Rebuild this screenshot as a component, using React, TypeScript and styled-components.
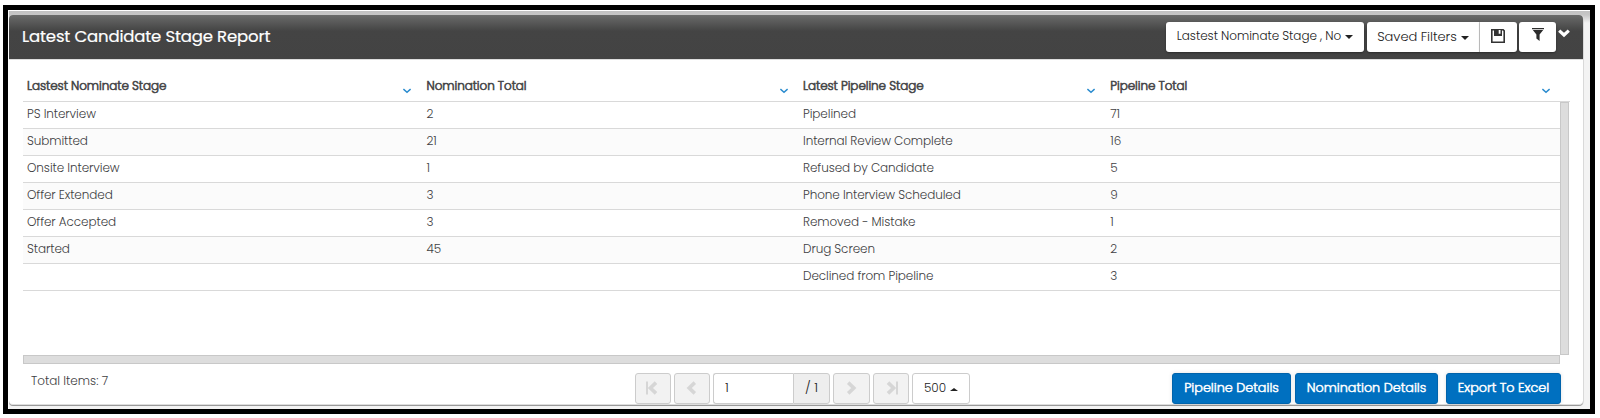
import React from 'react';
import styled, { createGlobalStyle } from 'styled-components';

const GlobalStyle = createGlobalStyle`
  *, *::before, *::after { box-sizing: border-box; }
  body {
    margin: 0;
    background: #fff;
    font-family: Poppins, Inter, "Open Sans", sans-serif;
    font-size: 12px;
    font-weight: 300;
    color: #404042;
  }
  button, input { font: inherit; color: inherit; }
`;

const Frame = styled.main`
  width: 1592px;
  height: 409px;
  margin: 5px 0 0 3px;
  border: 5px solid #000;
  padding: 1px 0 0 1px;
  background: #fff;
`;

const Backdrop = styled.div`
  height: 398px;
  padding: 4px 7px 0 0;
  background: linear-gradient(#c2c2c2 0, #c6c6c6 4px, #f3f3f3 12px);
`;

const Panel = styled.section`
  height: 390px;
  background: #fff;
  border-radius: 4px;
  box-shadow: 0 1px 0 #999, 1px 0 0 #d9d9d9;
  border-bottom: 1px solid #ddd;
`;

const PanelHeader = styled.header`
  display: flex;
  align-items: flex-start;
  height: 45px;
  padding: 7px 13px 0 13px;
  border-radius: 4px 4px 0 0;
  border-bottom: 1px solid #ddd;
  background: linear-gradient(#6a6b6a 0, #444 16px, #434343 100%);
`;

const Title = styled.h1`
  flex: 1;
  margin: 0;
  color: #fff;
  font-size: 16.5px;
  font-weight: 400;
  line-height: 29px;
  letter-spacing: -0.16px;
  -webkit-text-stroke: 0.2px currentColor;
  white-space: nowrap;
`;

const HeaderButton = styled.button<{ $width: number; $gap?: number; $join?: 'left' | 'right'; $size?: number }>`
  display: flex;
  align-items: center;
  justify-content: center;
  width: ${p => p.$width}px;
  height: 30px;
  margin: 0 0 0 ${p => p.$gap ?? 0}px;
  padding: ${p => (p.$join === 'left' ? '0' : '0 0 2px')};
  border: 0;
  border-right: ${p => (p.$join === 'left' ? '1px solid #ccc' : '0')};
  border-radius: ${p => (p.$join === 'left' ? '3px 0 0 3px' : p.$join === 'right' ? '0 3px 3px 0' : '3px')};
  background: #fff;
  box-shadow: 0 1px 2px rgba(0, 0, 0, 0.35);
  color: #222;
  font-size: ${p => p.$size ?? 12}px;
  letter-spacing: -0.05px;
  white-space: nowrap;
`;

const Caret = styled.span<{ $up?: boolean }>`
  margin-left: 4px;
  margin-top: ${p => (p.$up ? 4 : 1)}px;
  border: 0 solid transparent;
  border-width: ${p => (p.$up ? '0 4px 3.5px' : '4px 4px 0')};
  border-top-color: ${p => (p.$up ? 'transparent' : '#222')};
  border-bottom-color: ${p => (p.$up ? '#222' : 'transparent')};
`;

const Collapse = styled.div`
  width: 12px;
  margin: 7px 0 0 2px;
  line-height: 0;
`;

const Grid = styled.div`
  width: 1547px;
  margin-left: 14px;
  height: 304px;
`;

const columns = '399.5px 376.5px 307.3px 1fr';

const HeadRow = styled.div`
  display: grid;
  grid-template-columns: ${columns};
  height: 42px;
  padding-right: 9px;
  border-bottom: 1px solid #d9d9d9;
`;

const HeadCell = styled.div`
  display: flex;
  justify-content: space-between;
  padding: 16px 11.5px 0 4px;
  color: #464648;
  line-height: 20px;
  letter-spacing: -0.08px;
  -webkit-text-stroke: 0.6px currentColor;
  white-space: nowrap;

  svg { margin-top: 12px; }
`;

const Viewport = styled.div`
  display: flex;
  height: 253px;
`;

const Rows = styled.div`
  flex: 1;
`;

const Row = styled.div`
  display: grid;
  grid-template-columns: ${columns};
  height: 27px;
  border-bottom: 1px solid #d9d9d9;

  &:nth-child(even) { background: #fbfbfb; }
`;

const Cell = styled.div`
  padding-left: 4px;
  line-height: 24px;
  letter-spacing: -0.09px;
  white-space: nowrap;
`;

const VerticalTrack = styled.div`
  width: 9px;
  margin-right: 1px;
  border: 1px solid #c8c8c8;
  background: #ddd;
`;

const HorizontalTrack = styled.div`
  width: 1537px;
  height: 9px;
  border: 1px solid #c8c8c8;
  background: #ddd;
`;

const Footer = styled.footer`
  display: flex;
  height: 40px;
  padding: 9px 22px 0 22px;
`;

const Total = styled.div`
  width: 604px;
  line-height: 16px;
`;

const Pager = styled.nav`
  display: flex;
  flex: 1;
`;

const PageButton = styled.button<{ $width: number; $light?: boolean }>`
  display: flex;
  align-items: center;
  justify-content: center;
  width: ${p => p.$width}px;
  height: 31px;
  margin: 0 3px 0 0;
  padding: 0 0 2px;
  border: 1px solid #ccc;
  border-radius: 3px;
  background: ${p => (p.$light ? '#fff' : '#f2f2f2')};
  color: #222;
`;

const PageInput = styled.input`
  width: 80px;
  height: 31px;
  padding: 0 11px 2px;
  border: 1px solid #ccc;
  border-right: 0;
  border-radius: 3px 0 0 3px;
  color: #222;
  font-size: 13px;
`;

const PageCount = styled.span`
  width: 37px;
  height: 31px;
  margin-right: 3px;
  padding-left: 11px;
  border: 1px solid #ccc;
  border-radius: 0 3px 3px 0;
  background: #eee;
  color: #222;
  font-size: 13px;
  line-height: 27px;
  white-space: nowrap;
`;

const Action = styled.button<{ $width: number; $gap?: number }>`
  width: ${p => p.$width}px;
  height: 31px;
  margin: 0 0 0 ${p => p.$gap ?? 0}px;
  padding: 0 0 2px;
  border: 1px solid #0063ab;
  border-radius: 3px;
  background: #0070c0;
  box-shadow: 0 0 4px rgba(0, 0, 0, 0.12);
  color: #fff;
  font-size: 12.8px;
  -webkit-text-stroke: 0.5px currentColor;
  white-space: nowrap;
`;

const SortIcon = () => (
  <svg width="8" height="6" viewBox="0 0 8 6" fill="none" stroke="#2b8ccf" strokeWidth="1.5">
    <path d="M.4 1 4 4.2 7.6 1" />
  </svg>
);

const SaveIcon = () => (
  <svg width="14" height="14" viewBox="0 0 14 14" style={{ margin: '-1px 2px 0 0' }}>
    <path fill="#333" fillRule="evenodd" d="M0 0H12.5L14 1.5V14H0ZM1.6 1.6V12.4H12.4V2.2L11.8 1.6H11V7H3V1.6ZM7.7 1V4.7H9.5V1Z" />
  </svg>
);

const FilterIcon = () => (
  <svg width="12" height="13" viewBox="0 0 12 13" fill="#2c2c2c" style={{ marginTop: -3 }}>
    <path d="M0 0H12V1.2H0ZM.8 2H11.2L7.6 6.4V13L4.4 10.4V6.4Z" />
  </svg>
);

const CollapseIcon = () => (
  <svg width="12" height="9" viewBox="0 0 12 9" fill="none" stroke="#fff" strokeWidth="3.2">
    <path d="M1.2 1.6 6 6 10.8 1.6" />
  </svg>
);

const PageGlyph = styled.svg<{ $next?: boolean }>`
  margin-right: ${p => (p.$next ? 0 : 2)}px;
  transform: ${p => (p.$next ? 'scaleX(-1)' : 'none')};
`;

const PageIcon = ({ next, end }: { next?: boolean; end?: boolean }) => (
  <PageGlyph $next={next} width="13" height="14" viewBox="0 0 13 14" fill="none" stroke="#d6d6d6">
    <path strokeWidth="3.6" d={end ? 'M10 1.6 4.4 7 10 12.4' : 'M9.8 1.6 4.2 7 9.8 12.4'} />
    {end && <path strokeWidth="2" d="M1 .5V13.5" />}
  </PageGlyph>
);

const headings = ['Lastest Nominate Stage', 'Nomination Total', 'Latest Pipeline Stage', 'Pipeline Total'];

const rows = [
  ['PS Interview', '2', 'Pipelined', '71'],
  ['Submitted', '21', 'Internal Review Complete', '16'],
  ['Onsite Interview', '1', 'Refused by Candidate', '5'],
  ['Offer Extended', '3', 'Phone Interview Scheduled', '9'],
  ['Offer Accepted', '3', 'Removed - Mistake', '1'],
  ['Started', '45', 'Drug Screen', '2'],
  ['', '', 'Declined from Pipeline', '3'],
];

export default function App() {
  return (
    <>
      <GlobalStyle />
      <Frame>
        <Backdrop>
          <Panel>
            <PanelHeader>
              <Title>Latest Candidate Stage Report</Title>
              <HeaderButton $width={198}>Lastest Nominate Stage , No<Caret /></HeaderButton>
              <HeaderButton $width={113} $gap={3} $join="left" $size={13}>Saved Filters<Caret /></HeaderButton>
              <HeaderButton $width={37} $join="right"><SaveIcon /></HeaderButton>
              <HeaderButton $width={37} $gap={2}><FilterIcon /></HeaderButton>
              <Collapse><CollapseIcon /></Collapse>
            </PanelHeader>
            <Grid>
              <HeadRow>
                {headings.map(label => (
                  <HeadCell key={label}><span>{label}</span><SortIcon /></HeadCell>
                ))}
              </HeadRow>
              <Viewport>
                <Rows>
                  {rows.map((row, i) => (
                    <Row key={i}>{row.map((value, j) => <Cell key={j}>{value}</Cell>)}</Row>
                  ))}
                </Rows>
                <VerticalTrack />
              </Viewport>
              <HorizontalTrack />
            </Grid>
            <Footer>
              <Total>Total Items: 7</Total>
              <Pager>
                <PageButton $width={36}><PageIcon end /></PageButton>
                <PageButton $width={36}><PageIcon /></PageButton>
                <PageInput defaultValue="1" />
                <PageCount>/ 1</PageCount>
                <PageButton $width={37}><PageIcon next /></PageButton>
                <PageButton $width={36}><PageIcon next end /></PageButton>
                <PageButton $width={58} $light>500<Caret $up /></PageButton>
              </Pager>
              <Action $width={119}>Pipeline Details</Action>
              <Action $width={143} $gap={4}>Nomination Details</Action>
              <Action $width={115} $gap={8}>Export To Excel</Action>
            </Footer>
          </Panel>
        </Backdrop>
      </Frame>
    </>
  );
}
